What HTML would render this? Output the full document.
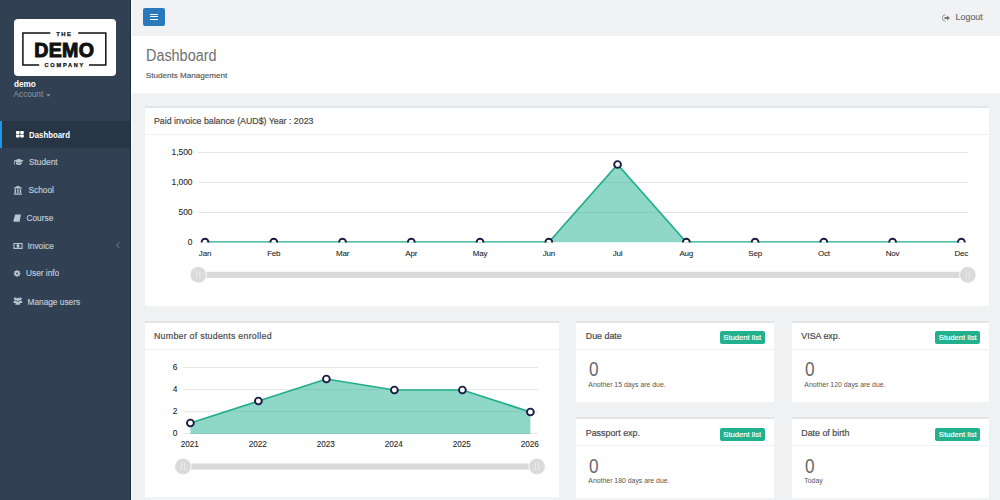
<!DOCTYPE html>
<html><head><meta charset="utf-8">
<style>
*{margin:0;padding:0;box-sizing:border-box}
html,body{width:1000px;height:500px;overflow:hidden;background:#f0f1f3;font-family:"Liberation Sans",sans-serif}
.abs{position:absolute}
#sidebar{position:absolute;left:0;top:0;width:130.5px;height:500px;background:#314153;border-right:1.3px solid #1b2a3e}
#strip{position:absolute;left:130.5px;top:0;width:1.5px;height:500px;background:#fff}
#logo{position:absolute;left:13.5px;top:18.5px;width:102.5px;height:57px;background:#fff;border-radius:4px}
.uname{position:absolute;left:13.6px;top:79.4px;color:#fff;font-weight:bold;font-size:8.8px;transform:scaleX(0.93);transform-origin:left top}
.acct{position:absolute;left:13.6px;top:90.2px;color:#8a99a8;font-size:8.2px}
.menu{position:absolute;left:0;width:130px;height:27.5px;color:#bfc9d3;font-size:8.3px}
.menu span.t{position:absolute;top:50%;transform:translateY(-50%);line-height:10px;-webkit-text-stroke:0.18px currentColor;white-space:nowrap}
.menu.active span.t{-webkit-text-stroke:0;transform:translateY(-50%) scaleX(0.945);transform-origin:left center}
.menu.active{background:#283544;color:#fff;font-weight:bold}
.menu.active:before{content:"";position:absolute;left:0;top:0;width:1.6px;height:100%;background:#2196e8}
#topbar{position:absolute;left:132px;top:0;width:868px;height:35.6px;background:#f1f2f4}
#header{position:absolute;left:132px;top:35.6px;width:868px;height:57.2px;background:#fff}
.box{position:absolute;background:#fff;border-top:2px solid #e0e5ea}
.box .hd{position:absolute;left:0;right:0;top:0;border-bottom:1px solid #eef0f2}
.box .ttl{position:absolute;color:#4a4a4a;font-size:8.5px;white-space:nowrap;-webkit-text-stroke:0.2px #4a4a4a}
.badge{position:absolute;background:#21b18e;color:#fff;font-size:7.65px;border-radius:2px;text-align:center;white-space:nowrap;-webkit-text-stroke:0.15px #fff}
.big{position:absolute;font-size:20px;color:#6a6a6a;font-weight:normal;transform:scaleX(0.86);transform-origin:left top}
.sub{position:absolute;font-size:6.9px;color:#555;white-space:nowrap}
svg text{font-family:"Liberation Sans",sans-serif}
svg{display:block}
</style></head>
<body>
<div id="sidebar">
  <div id="logo">
    <svg width="102.5" height="57" viewBox="0 0 102.5 57" style="position:absolute;left:0;top:0">
      <g fill="none" stroke="#111" stroke-width="1.5">
        <path d="M36.3 14.1 H8.9 V45.9 H25.2"/>
        <path d="M64.2 14.1 H91.8 V45.9 H75"/>
      </g>
      <text x="50.3" y="17.2" text-anchor="middle" font-size="5.9" font-weight="bold" fill="#111" stroke="#111" stroke-width="0.25" letter-spacing="1.5">THE</text>
      <text x="50.3" y="37.6" text-anchor="middle" font-size="19.6" font-weight="bold" fill="#111" stroke="#111" stroke-width="1" letter-spacing="0.3">DEMO</text>
      <text x="50.8" y="47.7" text-anchor="middle" font-size="5.6" font-weight="bold" fill="#111" stroke="#111" stroke-width="0.25" letter-spacing="1.75">COMPANY</text>
    </svg>
  </div>
  <div class="uname">demo</div>
  <div class="acct">Account</div><svg class="abs" style="left:46px;top:94.3px" width="5" height="3" viewBox="0 0 5 3"><path d="M0.3 0.3 H4.5 L2.4 2.6Z" fill="#8a99a8"/></svg>

  <div class="menu active" style="top:120.5px;height:27.6px"><span class="t" style="left:29px;margin-top:0.8px">Dashboard</span></div>
  <div class="menu" style="top:148.5px"><span class="t" style="left:29px">Student</span></div>
  <div class="menu" style="top:176.5px"><span class="t" style="left:28.5px">School</span></div>
  <div class="menu" style="top:204.3px"><span class="t" style="left:26.5px">Course</span></div>
  <div class="menu" style="top:231.8px"><span class="t" style="left:27.5px">Invoice</span></div>
  <div class="menu" style="top:259.5px"><span class="t" style="left:26px">User info</span></div>
  <div class="menu" style="top:288px"><span class="t" style="left:27.5px">Manage users</span></div>
  <svg class="abs" style="left:0;top:0" width="130" height="320" viewBox="0 0 130 320">
    <g fill="#fff"><rect x="16" y="131" width="3.6" height="2.9" rx="0.7"/><rect x="20.2" y="131" width="3.6" height="2.9" rx="0.7"/><rect x="16" y="134.5" width="3.6" height="2.9" rx="0.7"/><rect x="20.2" y="134.5" width="3.6" height="2.9" rx="0.7"/></g>
    <g fill="#b8c4cf">
      <path d="M13.7 160.8 L18.8 158.7 L23.9 160.8 L18.8 162.9Z"/>
      <path d="M16 162 V164.2 Q18.8 165.8 21.6 164.2 V162 L18.8 163.4Z"/>
      <path d="M14.4 161.1 V164.6" stroke="#b8c4cf" stroke-width="0.8"/>
      <path d="M17.9 185.7 L22 187.7 V188.5 H13.8 V187.7Z"/>
      <rect x="14.6" y="189.1" width="1.4" height="4"/><rect x="17.2" y="189.1" width="1.4" height="4"/><rect x="19.8" y="189.1" width="1.4" height="4"/>
      <rect x="13.8" y="193.4" width="8.2" height="1.3"/>
      <path d="M15.2 214.5 H21 L19.6 221.8 H14.3 Q13.1 221.8 13.4 220.6Z"/>
      <path d="M13.4 242.9 H22.6 V248.9 H13.4Z M14.5 244 V247.8 H21.5 V244Z" fill-rule="evenodd"/><ellipse cx="18" cy="245.9" rx="1.5" ry="1.9"/>
    </g>
    <g transform="translate(13.5 270)" fill="#b8c4cf"><path d="M7.08 3.11 L7.08 3.79 L6.18 4.23 L5.98 4.72 L6.31 5.67 L5.82 6.16 L4.87 5.83 L4.38 6.03 L3.94 6.93 L3.26 6.93 L2.82 6.03 L2.33 5.83 L1.38 6.16 L0.89 5.67 L1.22 4.72 L1.02 4.23 L0.12 3.79 L0.12 3.11 L1.02 2.67 L1.22 2.18 L0.89 1.23 L1.38 0.74 L2.33 1.07 L2.82 0.87 L3.26 -0.03 L3.94 -0.03 L4.38 0.87 L4.87 1.07 L5.82 0.74 L6.31 1.23 L5.98 2.18 L6.18 2.67Z M4.5 3.45 A0.9 0.9 0 1 0 2.7 3.45 A0.9 0.9 0 1 0 4.5 3.45Z" fill-rule="evenodd"/></g>
    <g fill="#b8c4cf">
      <circle cx="15.2" cy="298.8" r="1.4"/><circle cx="20.4" cy="298.8" r="1.4"/><circle cx="17.8" cy="299.4" r="1.7"/>
      <path d="M13.3 303 Q13.3 300.6 15.2 300.6 Q16.5 300.6 16.8 301.6 L15.8 303Z"/>
      <path d="M22.3 303 Q22.3 300.6 20.4 300.6 Q19.1 300.6 18.8 301.6 L19.8 303Z"/>
      <path d="M15.3 304.8 Q15.3 301.4 17.8 301.4 Q20.3 301.4 20.3 304.8Z"/>
    </g>
    <path d="M119.3 242.4 L116.8 245.3 L119.3 248.2" fill="none" stroke="#8a99a8" stroke-width="0.8"/>
  </svg>
</div>

<div id="strip"></div>
<div id="topbar">
  <div class="abs" style="left:10.8px;top:7.6px;width:22.4px;height:18.4px;background:#2a79ba;border-radius:2px">
    <div class="abs" style="left:7.4px;top:6.2px;width:7.4px;height:1.2px;background:#fff"></div>
    <div class="abs" style="left:7.4px;top:8.6px;width:7.4px;height:1.2px;background:#fff"></div>
    <div class="abs" style="left:7.4px;top:11px;width:7.4px;height:1.2px;background:#fff"></div>
  </div>
  <div class="abs" style="left:809.7px;top:13.5px"><svg style="display:block" width="8" height="8" viewBox="0 0 8 8"><path d="M3.5 0.8 A3.2 3.2 0 1 0 3.5 7.2" fill="none" stroke="#999" stroke-width="1"/><path d="M2.5 3 H5 V1.5 L8 4 L5 6.5 V5 H2.5Z" fill="#777"/></svg></div>
  <div class="abs" style="left:823.6px;top:12px;font-size:8.9px;color:#6a6a6a;-webkit-text-stroke:0.15px #6a6a6a">Logout</div>
</div>

<div id="header">
  <div class="abs" style="left:14.2px;top:11.6px;font-size:16px;color:#707070;transform:scaleX(0.9);transform-origin:left top">Dashboard</div>
  <div class="abs" style="left:13.8px;top:35.6px;font-size:8.1px;color:#555;-webkit-text-stroke:0.15px #555">Students Management</div>
</div>

<!-- Box 1 -->
<div class="box" style="left:145px;top:105.5px;width:844.2px;height:200.5px">
  <div class="hd" style="height:27.5px"></div>
  <div class="ttl" style="left:9px;top:8px;font-size:8.8px">Paid invoice balance (AUD$) Year : 2023</div>
</div>
<svg class="abs" style="left:0;top:0" width="1000" height="500" viewBox="0 0 1000 500">
  <g stroke="#e6e6e6" stroke-width="1">
    <line x1="198" y1="152.5" x2="968" y2="152.5"/>
    <line x1="198" y1="182.5" x2="968" y2="182.5"/>
    <line x1="198" y1="212.5" x2="968" y2="212.5"/>
  </g>
  <g font-size="8.4" fill="#222" text-anchor="end" stroke="#222" stroke-width="0.08">
    <text x="192.5" y="155">1,500</text>
    <text x="192.5" y="185">1,000</text>
    <text x="192.5" y="215">500</text>
    <text x="192.5" y="244.8">0</text>
  </g>
  <path d="M548.80 242.2 L617.56 164.5 L686.32 242.2 Z" fill="rgba(32,176,142,0.5)"/>
    <clipPath id="c1"><rect x="190" y="140" width="790" height="102.6"/></clipPath>
  <path clip-path="url(#c1)" d="M205.00 242.2 H548.80 L617.56 164.5 L686.32 242.2 H961.36" fill="none" stroke="#20ad8a" stroke-width="1.7"/>
  <g font-size="8" fill="#222" text-anchor="middle" stroke="#222" stroke-width="0.08" letter-spacing="-0.2">
    <text x="205.00" y="256.1">Jan</text><text x="273.76" y="256.1">Feb</text><text x="342.52" y="256.1">Mar</text><text x="411.28" y="256.1">Apr</text><text x="480.04" y="256.1">May</text><text x="548.80" y="256.1">Jun</text><text x="617.56" y="256.1">Jul</text><text x="686.32" y="256.1">Aug</text><text x="755.08" y="256.1">Sep</text><text x="823.84" y="256.1">Oct</text><text x="892.60" y="256.1">Nov</text><text x="961.36" y="256.1">Dec</text>
  </g>
  
  <g fill="#fff" stroke="#1a1c45" stroke-width="1.9" clip-path="url(#c1)">
    <circle cx="205.00" cy="242.2" r="3.4"/><circle cx="273.76" cy="242.2" r="3.4"/><circle cx="342.52" cy="242.2" r="3.4"/><circle cx="411.28" cy="242.2" r="3.4"/><circle cx="480.04" cy="242.2" r="3.4"/><circle cx="548.80" cy="242.2" r="3.4"/><circle cx="617.56" cy="164.5" r="3.4"/><circle cx="686.32" cy="242.2" r="3.4"/><circle cx="755.08" cy="242.2" r="3.4"/><circle cx="823.84" cy="242.2" r="3.4"/><circle cx="892.60" cy="242.2" r="3.4"/><circle cx="961.36" cy="242.2" r="3.4"/>
  </g>
  <!-- slider 1 -->
  <rect x="198" y="271.8" width="770" height="6.1" fill="#d9d9d9"/>
  <circle cx="198.3" cy="274.8" r="8.3" fill="#dadada" stroke="#fff" stroke-width="0.8"/><circle cx="967.8" cy="274.8" r="8.3" fill="#dadada" stroke="#fff" stroke-width="0.8"/>
  <g stroke="#ececec" stroke-width="0.9"><line x1="196.8" y1="271.1" x2="196.8" y2="278.5"/><line x1="199.8" y1="271.1" x2="199.8" y2="278.5"/><line x1="966.3" y1="271.1" x2="966.3" y2="278.5"/><line x1="969.3" y1="271.1" x2="969.3" y2="278.5"/></g>
</svg>

<!-- Box 2 -->
<div class="box" style="left:145px;top:320.5px;width:413.8px;height:176.2px">
  <div class="hd" style="height:27.5px"></div>
  <div class="ttl" style="left:9px;top:8.5px;font-size:8.8px;letter-spacing:0.27px">Number of students enrolled</div>
</div>
<svg class="abs" style="left:0;top:0" width="1000" height="500" viewBox="0 0 1000 500">
  <g stroke="#e6e6e6" stroke-width="1">
    <line x1="183" y1="367.6" x2="538" y2="367.6"/>
    <line x1="183" y1="389.6" x2="538" y2="389.6"/>
    <line x1="183" y1="411.6" x2="538" y2="411.6"/>
    <line x1="183" y1="433.6" x2="538" y2="433.6"/>
  </g>
  <g font-size="8.4" fill="#222" text-anchor="end" stroke="#222" stroke-width="0.08">
    <text x="177.5" y="370.2">6</text><text x="177.5" y="392.2">4</text><text x="177.5" y="414.2">2</text><text x="177.5" y="436.2">0</text>
  </g>
  <path d="M190.4 434.0 L190.4 423.0 L258.4 401.0 L326.4 379.0 L394.4 390.0 L462.4 390.0 L530.4 412.0 L530.4 434.0Z" fill="rgba(32,176,142,0.5)"/>
  <path d="M190.4 423.0 L258.4 401.0 L326.4 379.0 L394.4 390.0 L462.4 390.0 L530.4 412.0" fill="none" stroke="#20ad8a" stroke-width="1.7"/>
  <g fill="#fff" stroke="#1a1c45" stroke-width="1.9">
    <circle cx="190.4" cy="423.0" r="3.4"/><circle cx="258.4" cy="401.0" r="3.4"/><circle cx="326.4" cy="379.0" r="3.4"/><circle cx="394.4" cy="390.0" r="3.4"/><circle cx="462.4" cy="390.0" r="3.4"/><circle cx="530.4" cy="412.0" r="3.4"/>
  </g>
  <g font-size="8.2" fill="#222" text-anchor="middle" stroke="#222" stroke-width="0.08">
    <text x="189.8" y="447">2021</text><text x="257.8" y="447">2022</text><text x="325.8" y="447">2023</text><text x="393.8" y="447">2024</text><text x="461.8" y="447">2025</text><text x="529.8" y="447">2026</text>
  </g>
  <rect x="183" y="463.5" width="354" height="6.1" fill="#d9d9d9"/>
  <circle cx="183" cy="466.5" r="8.3" fill="#dadada" stroke="#fff" stroke-width="0.8"/><circle cx="537" cy="466.5" r="8.3" fill="#dadada" stroke="#fff" stroke-width="0.8"/>
  <g stroke="#ececec" stroke-width="0.9"><line x1="181.5" y1="462.8" x2="181.5" y2="470.2"/><line x1="184.5" y1="462.8" x2="184.5" y2="470.2"/><line x1="535.5" y1="462.8" x2="535.5" y2="470.2"/><line x1="538.5" y1="462.8" x2="538.5" y2="470.2"/></g>
</svg>

<!-- small boxes -->
<div class="box" style="left:576px;top:320.5px;width:198px;height:81.7px">
  <div class="hd" style="height:27px"></div>
  <div class="ttl" style="left:9.8px;top:8.6px;font-size:8.85px">Due date</div>
  <div class="badge" style="left:143.8px;top:8.8px;width:44.8px;height:13.2px;line-height:13.2px">Student list</div>
  <div class="big" style="left:12.5px;top:35.6px">0</div>
  <div class="sub" style="left:12.3px;top:58.2px">Another 15 days are due.</div>
</div>
<div class="box" style="left:792px;top:320.5px;width:197.2px;height:81.7px">
  <div class="hd" style="height:27px"></div>
  <div class="ttl" style="left:9.3px;top:8.6px;font-size:8.85px">VISA exp.</div>
  <div class="badge" style="left:143.3px;top:8.8px;width:44.8px;height:13.2px;line-height:13.2px">Student list</div>
  <div class="big" style="left:12.5px;top:35.6px">0</div>
  <div class="sub" style="left:12.3px;top:58.2px">Another 120 days are due.</div>
</div>
<div class="box" style="left:576px;top:417px;width:198px;height:80.6px">
  <div class="hd" style="height:27px"></div>
  <div class="ttl" style="left:9.8px;top:8.6px;font-size:8.85px">Passport exp.</div>
  <div class="badge" style="left:143.8px;top:8.8px;width:44.8px;height:13.2px;line-height:13.2px">Student list</div>
  <div class="big" style="left:12.5px;top:35.6px">0</div>
  <div class="sub" style="left:12.3px;top:58.2px">Another 180 days are due.</div>
</div>
<div class="box" style="left:792px;top:417px;width:197.2px;height:80.6px">
  <div class="hd" style="height:27px"></div>
  <div class="ttl" style="left:9.3px;top:8.6px;font-size:8.85px">Date of birth</div>
  <div class="badge" style="left:143.3px;top:8.8px;width:44.8px;height:13.2px;line-height:13.2px">Student list</div>
  <div class="big" style="left:12.5px;top:35.6px">0</div>
  <div class="sub" style="left:12.3px;top:58.2px">Today</div>
</div>
</body></html>
